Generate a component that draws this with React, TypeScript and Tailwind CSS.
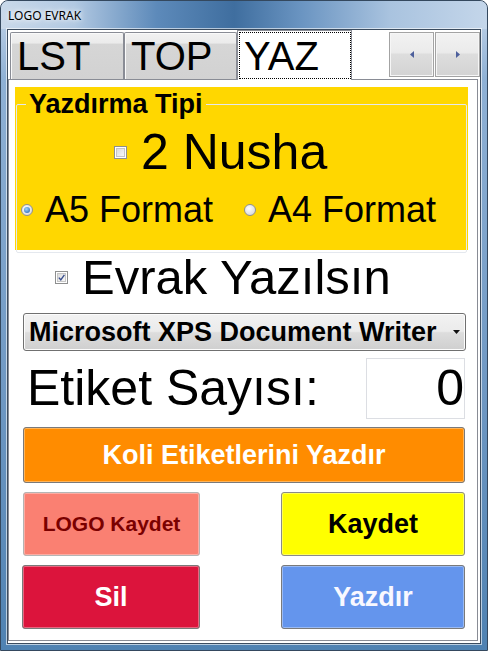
import React from "react";

const CheckBox = ({ checked }: { checked?: boolean }) => (
  <span className="w-[13px] h-[13px] shrink-0 border border-[#8e8f8f] bg-white p-px flex">
    <span className="flex-1 border border-[#c6c6c6] bg-[linear-gradient(135deg,#dcdcdc,#f7f7f7)] flex items-center justify-center">
      {checked && (
        <svg width="7" height="7" viewBox="0 0 7 7">
          <path d="M0.8 3.6 L2.8 5.8 L6.4 0.8" fill="none" stroke="#3a4f8e" strokeWidth="1.4" />
        </svg>
      )}
    </span>
  </span>
);

const Radio = ({ checked }: { checked?: boolean }) => (
  <span className="w-[12px] h-[12px] shrink-0 rounded-full border border-[#8f9092] bg-[radial-gradient(circle_at_40%_35%,#ffffff,#cfd0d2)] flex items-center justify-center">
    {checked && (
      <span className="w-[6px] h-[6px] rounded-full bg-[radial-gradient(circle_at_40%_35%,#9fd4ff,#1a5aa6)]" />
    )}
  </span>
);

const Tab = ({ label, selected, w }: { label: string; selected?: boolean; w: string }) =>
  selected ? (
    <div className={`${w} h-[50px] -mb-px relative z-10 bg-white border border-b-0 border-[#898c95] pt-px pl-px`}>
      <div className="h-[47px] border border-dotted border-black flex items-center pl-[4px] text-[40px] leading-none">
        {label}
      </div>
    </div>
  ) : (
    <div className={`${w} h-[47px] border border-b-0 border-[#898c95] rounded-t-[2px] bg-[linear-gradient(180deg,#f2f2f2_0%,#ebebeb_22%,#d6d6d6_24%,#d2d2d2_100%)] shadow-[inset_1px_1px_0_#fafafa] flex items-center pl-[6px] text-[40px] leading-none`}>
      {label}
    </div>
  );

const NavButton = ({ dir }: { dir: "left" | "right" }) => (
  <div className="w-[45px] h-[45px] border border-[#a3a3a3] bg-[linear-gradient(180deg,#f2f2f2_0%,#ebebeb_45%,#dddddd_50%,#d3d3d3_100%)] shadow-[inset_0_0_0_1px_#f6f6f6] flex items-center justify-center">
    <svg width="4" height="7" viewBox="0 0 4 7">
      {dir === "left" ? <path d="M4 0 L0 3.5 L4 7 Z" fill="#4d5f9c" /> : <path d="M0 0 L4 3.5 L0 7 Z" fill="#4d5f9c" />}
    </svg>
  </div>
);

const Btn = ({ label, className }: { label: string; className: string }) => (
  <button
    className={`h-full rounded-[3px] border font-bold shadow-[inset_0_0_0_1px_rgba(255,255,255,0.35)] flex items-center justify-center ${className}`}
  >
    {label}
  </button>
);

export default function App() {
  return (
    <div className="w-[488px] h-[651px] rounded-t-[8px] border border-[#34485e] bg-[linear-gradient(180deg,#c6d7ea_0%,#8fb1d5_12%,#6f98c3_60%,#4f82b2_100%)] flex flex-col font-['Liberation_Sans',Arial,sans-serif] text-black overflow-hidden">
      {/* title bar */}
      <div className="h-[28px] shrink-0 rounded-t-[7px] bg-[linear-gradient(90deg,#c9d9ea_0%,#b2c9e2_15%,#5d8aba_32%,#3f6e9f_48%,#6b95c2_62%,#a9c3df_80%,#c4d6ea_100%)] flex items-center pl-[7px] pt-[2px]">
        <span className="font-['Noto_Sans',sans-serif] text-[12px] text-black [text-shadow:0_0_8px_#fff,0_0_4px_#fff]">LOGO EVRAK</span>
      </div>

      <div className="flex-1 px-[6px] pb-[6px] pt-0">
        <div className="h-full border border-[#3b4c5f] shadow-[0_0_0_1px_rgba(255,255,255,0.6)] bg-white flex flex-col">
          {/* tab strip */}
          <div className="h-[49px] shrink-0 flex items-end pl-[2px]">
            <Tab label="LST" w="w-[114px]" />
            <Tab label="TOP" w="w-[113px]" />
            <Tab label="YAZ" w="w-[115px]" selected />
            <div className="ml-auto self-start mt-[2px] flex gap-px">
              <NavButton dir="left" />
              <NavButton dir="right" />
            </div>
          </div>

          {/* tab page */}
          <div className="w-[470px] h-[562px] border border-[#898c95] flex flex-col">
            {/* yellow group */}
            <div className="mt-[7px] ml-[6px] w-[453px] h-[163px] bg-[#ffd700] pt-[2px]">
              <fieldset className="mx-px h-[164px] border border-[#e4e8ee] rounded-[2px] flex flex-col">
                <legend className="ml-[9px] px-[3px] text-[27px] font-bold leading-[30px]">Yazdırma Tipi</legend>
                <div className="mt-[5px] h-[56px] flex items-center pl-[97px] gap-[14px]">
                  <CheckBox />
                  <span className="text-[50px] leading-[56px]">2 Nusha</span>
                </div>
                <div className="mt-[10px] h-[40px] flex items-center pl-[4px]">
                  <Radio checked />
                  <span className="ml-[12px] text-[36px] leading-[40px]">A5 Format</span>
                  <span className="ml-[31px]">
                    <Radio />
                  </span>
                  <span className="ml-[12px] text-[36px] leading-[40px]">A4 Format</span>
                </div>
              </fieldset>
            </div>

            {/* evrak */}
            <div className="h-[54px] flex items-center ml-[46px] gap-[14px]">
              <CheckBox checked />
              <span className="text-[49px] leading-[54px]">Evrak Yazılsın</span>
            </div>

            {/* printer combo */}
            <div className="mt-[9px] ml-[14px] w-[443px] h-[38px] rounded-[3px] border border-[#707070] bg-[linear-gradient(180deg,#f2f2f2_0%,#ebebeb_48%,#dddddd_52%,#cfcfcf_100%)] shadow-[inset_0_0_0_1px_#fcfcfc] flex items-center pl-[5px] pr-[5px]">
              <span className="text-[27px] font-bold leading-none whitespace-nowrap">Microsoft XPS Document Writer</span>
              <svg className="ml-auto" width="7" height="4" viewBox="0 0 7 4">
                <path d="M0 0 L7 0 L3.5 4 Z" fill="#111" />
              </svg>
            </div>

            {/* etiket sayisi */}
            <div className="mt-[7px] ml-[14px] w-[442px] h-[61px] flex items-center justify-between">
              <span className="ml-[4px] text-[50px] leading-[61px]">Etiket Sayısı:</span>
              <div className="w-[99px] h-[61px] border border-[#dcdee3] bg-white flex items-center justify-end pr-0">
                <span className="text-[50px] leading-[61px]">0</span>
              </div>
            </div>

            {/* koli button */}
            <div className="mt-[8px] ml-[14px] w-[442px] h-[56px]">
              <Btn label="Koli Etiketlerini Yazdır" className="w-full bg-[#ff8c00] border-[#7a7a7a] text-white text-[27px]" />
            </div>

            <div className="mt-[9px] ml-[14px] w-[442px] h-[64px] flex justify-between">
              <Btn label="LOGO Kaydet" className="w-[177px] bg-[#fa8072] border-[#b5b5b5] text-[#7a0000] text-[21px]" />
              <Btn label="Kaydet" className="w-[184px] bg-[#ffff00] border-[#8a8a8a] text-black text-[27px]" />
            </div>

            <div className="mt-[9px] ml-[13px] w-[443px] h-[64px] flex justify-between">
              <Btn label="Sil" className="w-[178px] bg-[#dc143c] border-[#7a7a7a] text-white text-[27px]" />
              <Btn label="Yazdır" className="w-[184px] bg-[#6495ed] border-[#7a7a7a] text-[#f8f8ff] text-[27px]" />
            </div>
          </div>
        </div>
      </div>
    </div>
  );
}
